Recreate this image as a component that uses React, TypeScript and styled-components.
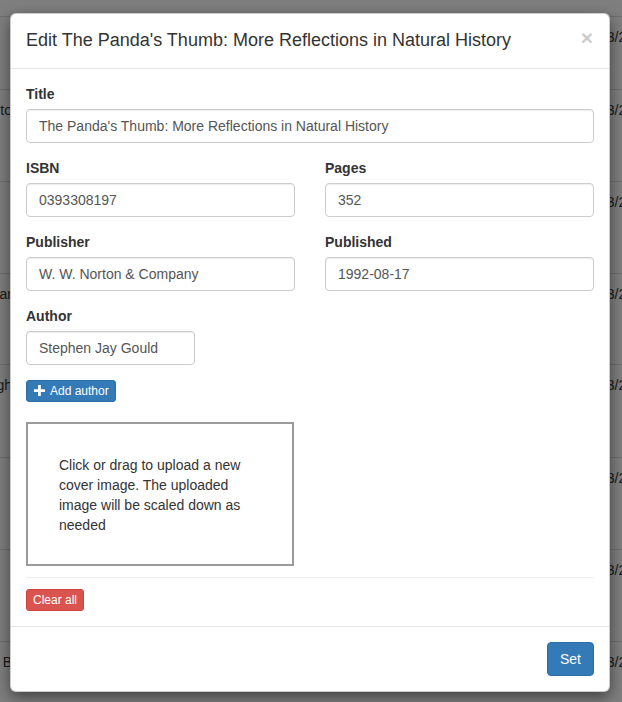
import React from 'react'
import styled, { createGlobalStyle } from 'styled-components'

const GlobalStyle = createGlobalStyle`
  html, body {
    margin: 0;
    padding: 0;
    background: #fff;
  }
  body {
    font-family: 'Liberation Sans', Arial, sans-serif;
    font-size: 14px;
    line-height: 1.42857143;
    color: #333;
  }
  * {
    box-sizing: border-box;
  }
`

const Page = styled.div`
  position: relative;
  width: 622px;
  height: 702px;
  overflow: hidden;
`

// the book list behind the dialog
const BookTable = styled.div`
  display: flex;
  flex-direction: column;
`

const BookRow = styled.div<{ $h: number; $top?: boolean }>`
  display: grid;
  grid-template-columns: 12px 1fr 23px;
  height: ${(p) => p.$h}px;
  border-bottom: 1px solid #ddd;
  padding-top: ${(p) => (p.$top ? 0 : 10)}px;
`

const Clip = styled.div`
  display: flex;
  justify-content: flex-end;
  overflow: hidden;
  white-space: nowrap;
`

const DateCell = styled.div`
  white-space: nowrap;
  overflow: hidden;
`

const Backdrop = styled.div`
  position: absolute;
  inset: 0;
  background: rgba(0, 0, 0, 0.5);
`

const Modal = styled.div`
  position: absolute;
  left: 10px;
  top: 13px;
  width: 600px;
  background: #fff;
  border: 1px solid rgba(0, 0, 0, 0.2);
  border-radius: 6px;
  box-shadow: 0 5px 15px rgba(0, 0, 0, 0.5);
`

const Header = styled.div`
  display: flex;
  align-items: flex-start;
  justify-content: space-between;
  padding: 14px 15px;
  border-bottom: 1px solid #e5e5e5;
`

const Title = styled.h4`
  margin: 0;
  font-size: 18px;
  font-weight: 500;
  line-height: 1.42857143;
`

const Close = styled.button`
  margin-top: -1px;
  margin-right: 1px;
  padding: 0;
  border: 0;
  background: transparent;
  font-family: inherit;
  font-size: 21px;
  font-weight: 700;
  line-height: 1;
  color: #000;
  opacity: 0.2;
  cursor: pointer;
`

const Body = styled.div`
  padding: 15px;
`

const Grid = styled.div<{ $cols: number }>`
  display: grid;
  grid-template-columns: repeat(${(p) => p.$cols}, 1fr);
  column-gap: 30px;
`

const FormGroup = styled.div`
  margin-bottom: 15px;
`

const Label = styled.label`
  display: block;
  margin-bottom: 5px;
  font-weight: 700;
`

const Input = styled.input`
  display: block;
  width: 100%;
  height: 34px;
  padding: 6px 12px;
  font-family: inherit;
  font-size: 14px;
  color: #555;
  background: #fff;
  border: 1px solid #ccc;
  border-radius: 4px;
  box-shadow: inset 0 1px 1px rgba(0, 0, 0, 0.075);
  outline: none;
`

const Button = styled.button<{ $variant: 'primary' | 'danger'; $size?: 'xs' }>`
  display: inline-flex;
  align-items: center;
  gap: 5px;
  font-family: inherit;
  color: #fff;
  cursor: pointer;
  background: ${(p) => (p.$variant === 'primary' ? '#337ab7' : '#d9534f')};
  border: 1px solid ${(p) => (p.$variant === 'primary' ? '#2e6da4' : '#d43f3a')};
  font-size: ${(p) => (p.$size === 'xs' ? 12 : 14)}px;
  line-height: ${(p) => (p.$size === 'xs' ? 1.5 : 1.42857143)};
  padding: ${(p) => (p.$size === 'xs' ? '1px 6px' : '6px 12px')};
  border-radius: ${(p) => (p.$size === 'xs' ? 3 : 4)}px;
`

const DropZone = styled.div`
  display: flex;
  align-items: center;
  width: 268px;
  height: 144px;
  margin-top: 20px;
  padding: 2px 30px 0 31px;
  border: 2px solid #9b9b9b;
  cursor: pointer;
`

const DropText = styled.p`
  margin: 0;
  width: 192px;
`

const Rule = styled.hr`
  margin: 11px 0;
  border: 0;
  border-top: 1px solid #eee;
`

const Footer = styled.div`
  display: flex;
  justify-content: flex-end;
  padding: 15px;
  border-top: 1px solid #e5e5e5;
`

const PlusIcon = () => (
  <svg width="12" height="11" viewBox="0 0 13 12" aria-hidden="true">
    <path d="M5.5 0h3v4.5H13v3H8.5V12h-3V7.5H1v-3h4.5z" fill="currentColor" />
  </svg>
)

const rows = [
  { h: 17, left: '', top: true },
  { h: 73, left: '' },
  { h: 92, left: 'to' },
  { h: 92, left: '' },
  { h: 91, left: 'ar' },
  { h: 93, left: 'gh' },
  { h: 92, left: '' },
  { h: 92, left: '' },
  { h: 92, left: 'd B' }
]

const App = () => {
  return (
    <Page>
      <GlobalStyle />
      <BookTable>
        {rows.map((row, i) => (
          <BookRow key={`row-${i}`} $h={row.h} $top={row.top}>
            <Clip>{row.left}</Clip>
            <div />
            <DateCell>{row.top ? '' : '03/23/2016'}</DateCell>
          </BookRow>
        ))}
      </BookTable>
      <Backdrop />
      <Modal>
        <Header>
          <Title>Edit The Panda's Thumb: More Reflections in Natural History</Title>
          <Close>×</Close>
        </Header>
        <Body>
          <FormGroup>
            <Label>Title</Label>
            <Input defaultValue="The Panda's Thumb: More Reflections in Natural History" />
          </FormGroup>
          <Grid $cols={2}>
            <FormGroup>
              <Label>ISBN</Label>
              <Input defaultValue='0393308197' />
            </FormGroup>
            <FormGroup>
              <Label>Pages</Label>
              <Input defaultValue='352' />
            </FormGroup>
            <FormGroup>
              <Label>Publisher</Label>
              <Input defaultValue='W. W. Norton & Company' />
            </FormGroup>
            <FormGroup>
              <Label>Published</Label>
              <Input defaultValue='1992-08-17' />
            </FormGroup>
          </Grid>
          <Grid $cols={3}>
            <FormGroup>
              <Label>Author</Label>
              <Input defaultValue='Stephen Jay Gould' />
            </FormGroup>
          </Grid>
          <div>
            <Button $variant='primary' $size='xs'>
              <PlusIcon />
              Add author
            </Button>
          </div>
          <DropZone>
            <DropText>
              Click or drag to upload a new cover image. The uploaded image will be scaled down as needed
            </DropText>
          </DropZone>
          <Rule />
          <Button $variant='danger' $size='xs'>
            Clear all
          </Button>
        </Body>
        <Footer>
          <Button $variant='primary'>Set</Button>
        </Footer>
      </Modal>
    </Page>
  )
}

export default App
